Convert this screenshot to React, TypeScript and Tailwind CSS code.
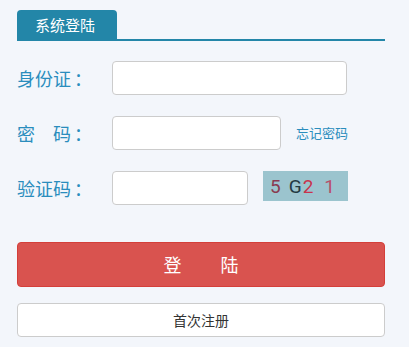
export default function App() {
  const cjk = { fontFamily: '"Microsoft YaHei", "Noto Sans CJK SC", sans-serif' };
  return (
    <div className="w-[409px] h-[347px] bg-[#f3f6fb] overflow-hidden" style={cjk}>
      <div className="ml-[17px] w-[368px] pt-[10px]">
        <div className="flex border-b-2 border-[#2386a8]">
          <div className="w-[100px] h-[29px] bg-[#2386a8] rounded-t-[4px] text-white text-[15px] leading-[29px] pl-[18px]">
            系统登陆
          </div>
        </div>

        <div className="mt-[20px] flex items-center h-[34px]">
          <div className="w-[95px] text-[18px] text-[#2a8dbd]">
            身份证<span className="ml-[3px]">：</span>
          </div>
          <input className="w-[235px] h-[34px] bg-white border border-[#cccccc] rounded-[4px] outline-none" />
        </div>

        <div className="mt-[21px] flex items-center h-[34px]">
          <div className="w-[95px] text-[18px] text-[#2a8dbd]">
            密　码<span className="ml-[3px]">：</span>
          </div>
          <input type="password" className="w-[169px] h-[34px] bg-white border border-[#cccccc] rounded-[4px] outline-none" />
          <a className="ml-[15px] text-[13px] text-[#2a8dbd]">忘记密码</a>
        </div>

        <div className="mt-[21px] flex items-start h-[34px]">
          <div className="w-[95px] text-[18px] text-[#2a8dbd] leading-[34px]">
            验证码<span className="ml-[3px]">：</span>
          </div>
          <input className="w-[136px] h-[34px] bg-white border border-[#cccccc] rounded-[4px] outline-none" />
          <div
            className="ml-[15px] w-[85px] h-[30px] bg-[#9bc4ce] flex items-center pl-[7px] text-[19px] leading-none"
            style={{ fontFamily: 'Roboto, "Liberation Sans", sans-serif' }}
          >
            <span className="text-[#8a3a50]">5</span>
            <span className="ml-[8px] text-[#243a42]">G</span>
            <span className="ml-[1px] text-[#c8344e]">2</span>
            <span className="ml-[11px] text-[#b8506a]">1</span>
          </div>
        </div>

        <button className="mt-[37px] w-[368px] h-[45px] bg-[#d9534f] border border-[#d43f3a] rounded-[4px] text-white text-[18px] flex items-center justify-center">
          <span>登</span>
          <span className="ml-[39px]">陆</span>
        </button>

        <button className="mt-[16px] w-[368px] h-[34px] bg-white border border-[#cccccc] rounded-[4px] text-[#333333] text-[14px] flex items-center justify-center">
          首次注册
        </button>
      </div>
    </div>
  );
}
